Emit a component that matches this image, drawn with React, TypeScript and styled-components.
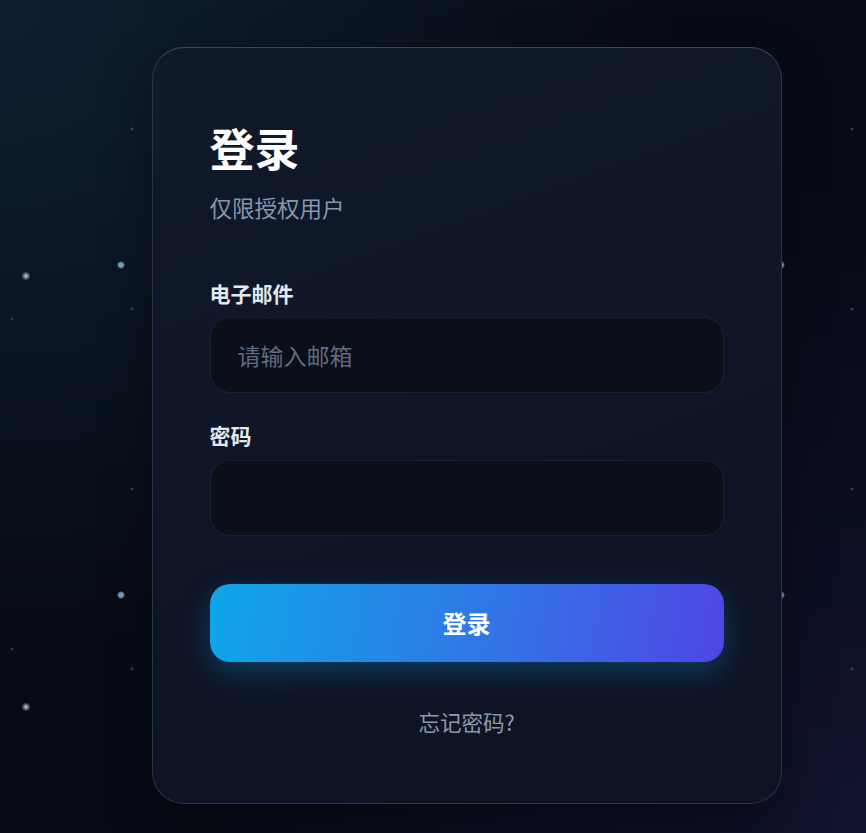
import React from "react";
import styled, { createGlobalStyle } from "styled-components";

const GlobalStyle = createGlobalStyle`
  html, body {
    margin: 0;
    padding: 0;
    height: 100%;
  }
  body {
    background: #070b16;
    font-family: "Noto Sans CJK SC", "Noto Sans", sans-serif;
  }
`;

const App: React.FC = () => {
  return (
    <>
      <GlobalStyle />
      <StyledPage>
        <StyledCard>
          <StyledTitle>登录</StyledTitle>
          <StyledSubtitle>仅限授权用户</StyledSubtitle>

          <StyledForm onSubmit={(e) => e.preventDefault()}>
            <StyledField>
              <StyledLabel htmlFor="email">电子邮件</StyledLabel>
              <StyledInput id="email" type="email" placeholder="请输入邮箱" />
            </StyledField>
            <StyledField>
              <StyledLabel htmlFor="password">密码</StyledLabel>
              <StyledInput id="password" type="password" />
            </StyledField>
            <StyledButton type="submit">登录</StyledButton>
          </StyledForm>

          <StyledForgot href="#">忘记密码?</StyledForgot>
        </StyledCard>
      </StyledPage>
    </>
  );
};

export default App;

const StyledPage = styled.div`
  min-height: 833px;
  box-sizing: border-box;
  display: flex;
  justify-content: center;
  align-items: flex-start;
  padding: 47px 0 0 67px;
  background-color: #070b16;
  background-image:
    radial-gradient(circle at 26px 276px, rgba(226, 232, 240, 0.95) 0, rgba(226, 232, 240, 0.5) 2px, transparent 4.5px),
    radial-gradient(circle at 121px 265px, rgba(147, 197, 230, 0.9) 0, rgba(147, 197, 230, 0.7) 2.5px, transparent 4px),
    radial-gradient(circle at 12px 319px, rgba(148, 163, 184, 0.45) 0, transparent 1.8px),
    radial-gradient(circle at 132px 129px, rgba(148, 163, 184, 0.5) 0, transparent 2px),
    radial-gradient(ellipse at 0% 0%, rgba(20, 45, 65, 0.6), transparent 55%),
    radial-gradient(ellipse at 100% 100%, rgba(30, 32, 80, 0.4), transparent 55%),
    linear-gradient(180deg, #070b16, #070b16);
  background-size: 431px 431px, 330px 330px, 330px 330px, 180px 180px, 100% 100%, 100% 100%, 100% 100%;
  background-repeat: repeat, repeat, repeat, repeat, no-repeat, no-repeat, no-repeat;
`;

const StyledCard = styled.div`
  width: 630px;
  box-sizing: border-box;
  padding: 71px 57px 66px;
  border-radius: 32px;
  border: 1px solid rgba(148, 163, 184, 0.22);
  border-top-color: rgba(148, 163, 184, 0.35);
  background: linear-gradient(160deg, #101a2b 0%, #0e1526 50%, #0e1324 100%);
  box-shadow: 0 20px 50px rgba(0, 0, 0, 0.35);
  display: flex;
  flex-direction: column;
`;

const StyledTitle = styled.h1`
  margin: 0;
  font-size: 45px;
  line-height: 1.3;
  font-weight: 700;
  color: #ffffff;
`;

const StyledSubtitle = styled.p`
  margin: 14px 0 0;
  font-size: 22.5px;
  line-height: 1.4;
  color: #8796aa;
`;

const StyledForm = styled.form`
  margin-top: 57px;
  display: flex;
  flex-direction: column;
`;

const StyledField = styled.div`
  display: flex;
  flex-direction: column;
  gap: 10px;
  margin-bottom: 29px;
`;

const StyledLabel = styled.label`
  font-size: 21px;
  line-height: 1.3;
  font-weight: 700;
  color: #e2e8f0;
`;

const StyledInput = styled.input`
  height: 76px;
  box-sizing: border-box;
  padding: 0 27px;
  border-radius: 20px;
  border: 1px solid rgba(148, 163, 184, 0.12);
  background: #0a0f1a;
  color: #e2e8f0;
  font-family: inherit;
  font-size: 23px;
  outline: none;

  &::placeholder {
    color: #5f6b7e;
  }
`;

const StyledButton = styled.button`
  margin-top: 19px;
  height: 78px;
  border: none;
  border-radius: 20px;
  background: linear-gradient(100deg, #0ea5e9 0%, #2b7fe6 45%, #4f46e5 100%);
  box-shadow: 0 10px 28px rgba(14, 165, 233, 0.28);
  color: #ffffff;
  font-family: inherit;
  font-size: 24px;
  font-weight: 700;
  cursor: pointer;
`;

const StyledForgot = styled.a`
  align-self: center;
  margin-top: 45px;
  font-size: 21.5px;
  line-height: 1.4;
  color: #8d99ab;
  text-decoration: none;
`;
